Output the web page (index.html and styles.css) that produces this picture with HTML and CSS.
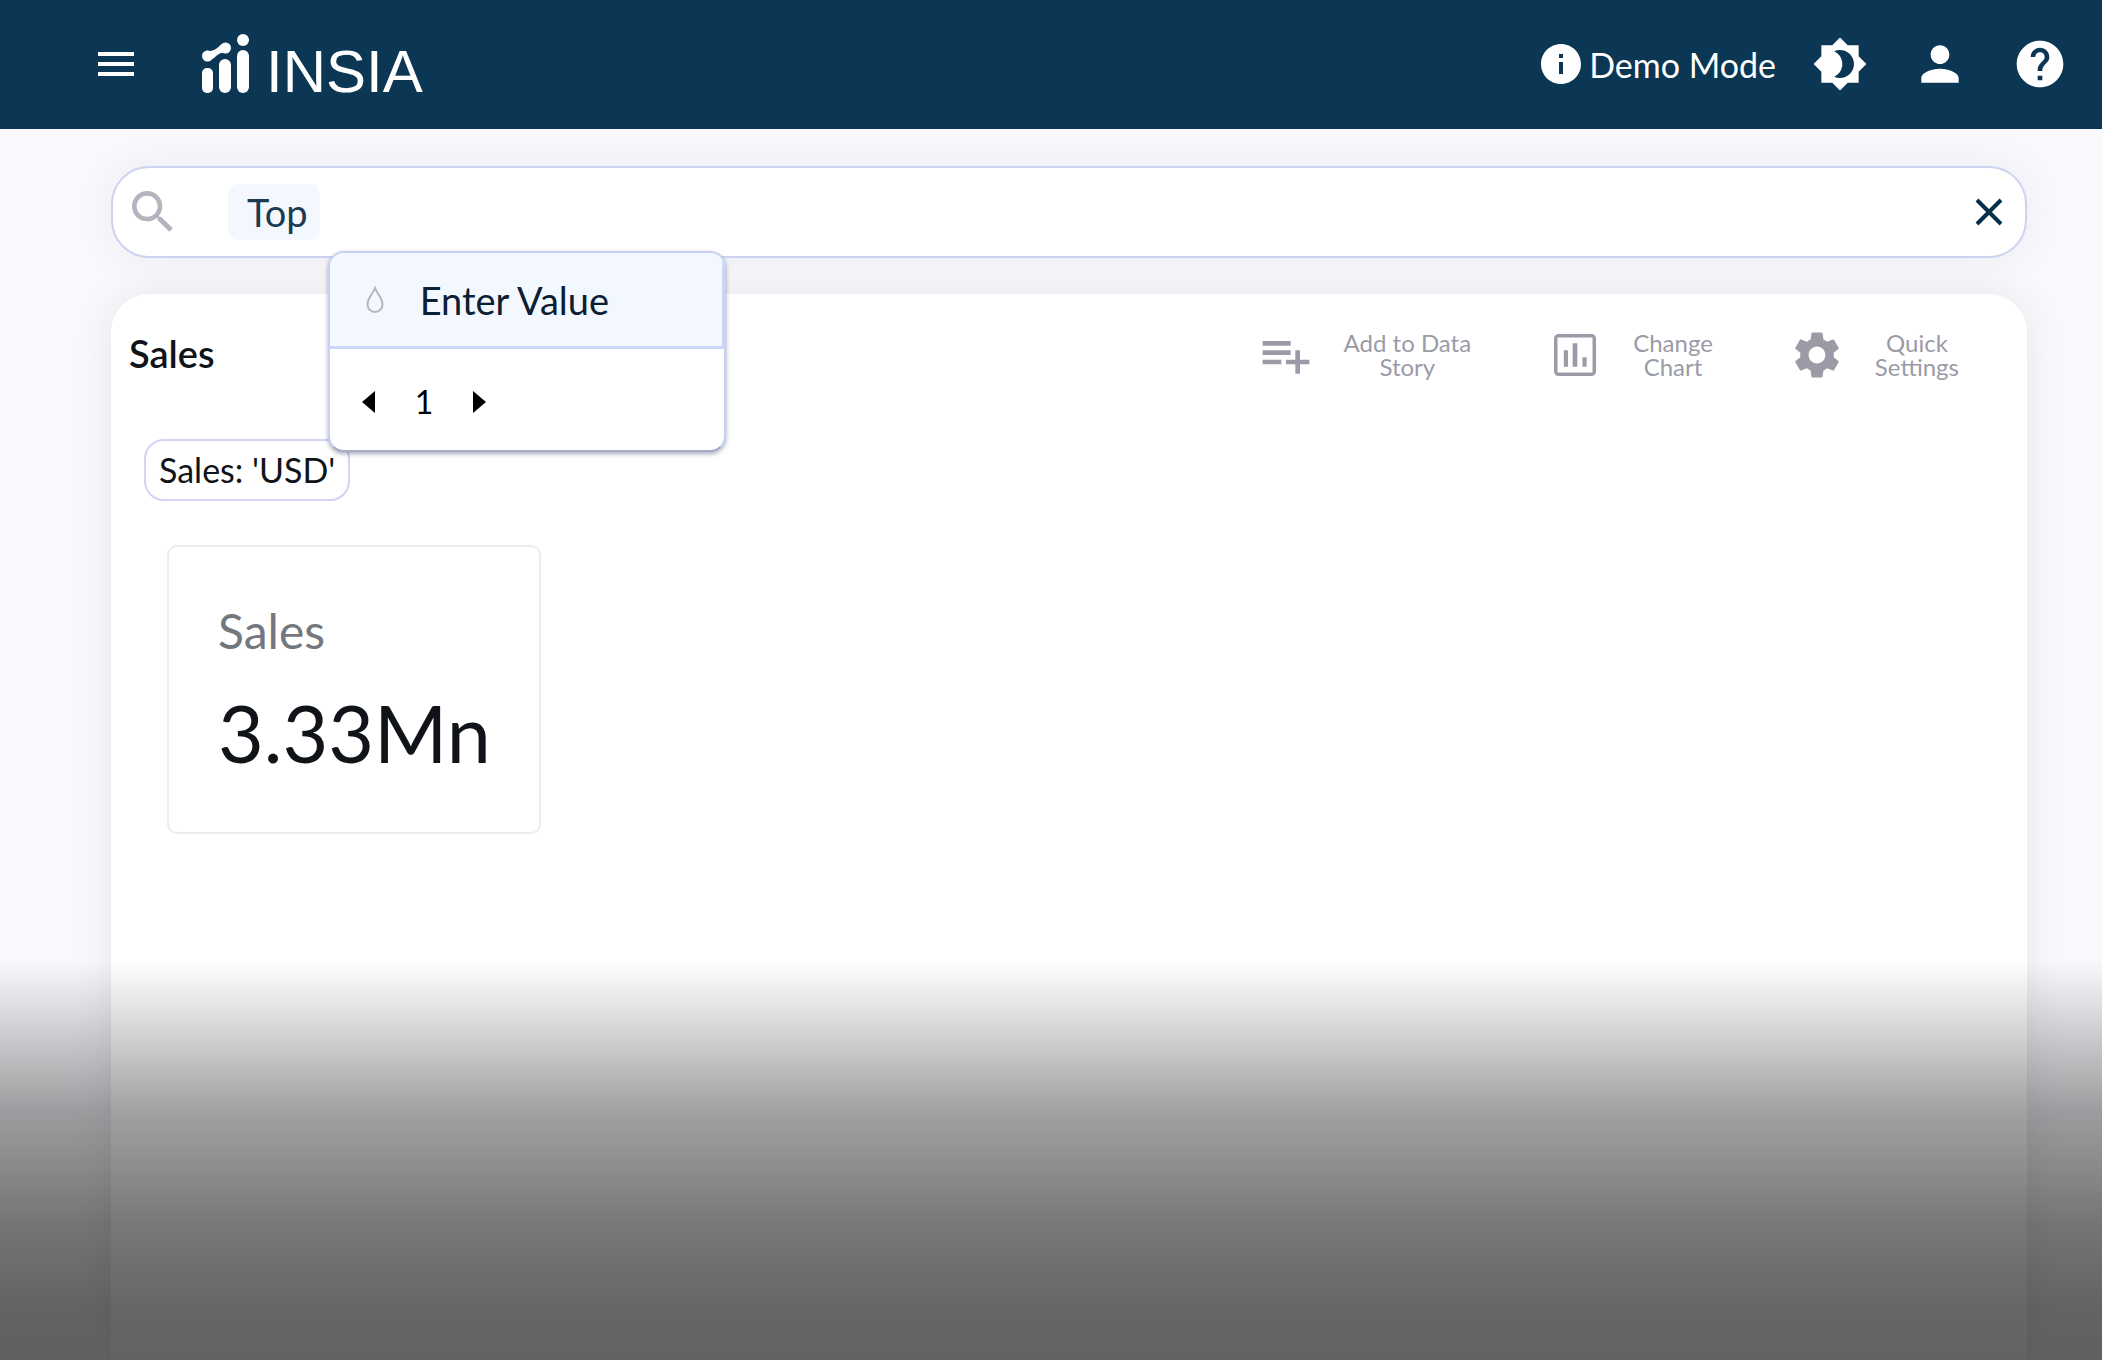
FILE: index.html
```html
<!DOCTYPE html>
<html lang="en">
<head>
  <meta charset="utf-8">
  <meta name="viewport" content="width=device-width, initial-scale=1">
  <title>INSIA</title>
  <link rel="stylesheet" href="styles.css">
</head>
<body>
  <header class="topbar">
    <button class="icon-button" type="button" aria-label="Menu">
      <svg class="menu-icon" viewBox="0 0 36 24" aria-hidden="true"><path d="M0 0h36v4H0zM0 10h36v4H0zM0 20h36v4H0z"/></svg>
    </button>
    <a class="brand" href="#">
      <svg class="brand-mark" viewBox="0 0 48 60" aria-hidden="true">
        <rect x="0" y="34" width="11" height="25" rx="5"/>
        <rect x="17" y="25" width="12" height="34" rx="6"/>
        <rect x="35" y="16" width="12" height="43" rx="6"/>
        <circle cx="41" cy="6" r="6"/>
        <circle cx="5.500" cy="22" r="5.500"/>
        <circle cx="23.500" cy="14" r="5.500"/>
        <path d="M5 16.500Q12 18.500 19 10.500L27 18Q18 17 12 24L7 27.300z"/>
      </svg>
      <span class="brand-name">INSIA</span>
    </a>
    <nav class="tools" aria-label="Account">
      <button class="demo" type="button">
        <svg class="demo-icon" viewBox="0 0 24 24" aria-hidden="true"><path d="M12 2C6.480 2 2 6.480 2 12s4.480 10 10 10 10-4.480 10-10S17.520 2 12 2zm1 15h-2v-6h2v6zm0-8h-2V7h2v2z"/></svg>
        <span>Demo Mode</span>
      </button>
      <button class="icon-button" type="button" aria-label="Theme">
        <svg class="icon" viewBox="0 0 24 24" aria-hidden="true"><path d="M20 8.690V4h-4.690L12 .69 8.690 4H4v4.690L.69 12 4 15.310V20h4.690L12 23.310 15.310 20H20v-4.690L23.310 12 20 8.690zM12 18c-.89 0-1.740-.2-2.500-.55C11.560 16.500 13 14.420 13 12s-1.440-4.500-3.500-5.450C10.260 6.200 11.110 6 12 6c3.310 0 6 2.690 6 6s-2.690 6-6 6z"/></svg>
      </button>
      <button class="icon-button" type="button" aria-label="Profile">
        <svg class="icon" viewBox="0 0 24 24" aria-hidden="true"><path d="M12 12c2.210 0 4-1.790 4-4s-1.790-4-4-4-4 1.790-4 4 1.790 4 4 4zm0 2c-2.670 0-8 1.340-8 4v2h16v-2c0-2.660-5.330-4-8-4z"/></svg>
      </button>
      <button class="icon-button" type="button" aria-label="Help">
        <svg class="icon" viewBox="0 0 24 24" aria-hidden="true"><path d="M12 2C6.480 2 2 6.480 2 12s4.480 10 10 10 10-4.480 10-10S17.520 2 12 2zm1 17h-2v-2h2v2zm2.070-7.750l-.9.920C13.450 12.900 13 13.500 13 15h-2v-.5c0-1.100.45-2.100 1.170-2.830l1.240-1.260c.37-.36.59-.86.59-1.410 0-1.100-.9-2-2-2s-2 .9-2 2H8c0-2.210 1.790-4 4-4s4 1.790 4 4c0 .88-.36 1.680-.93 2.250z"/></svg>
      </button>
    </nav>
  </header>

  <main class="page">
    <form class="search" role="search">
      <svg class="icon search-icon" viewBox="0 0 24 24" aria-hidden="true"><path d="M15.500 14h-.79l-.28-.27C15.410 12.590 16 11.110 16 9.500 16 5.910 13.090 3 9.500 3S3 5.910 3 9.500 5.910 16 9.500 16c1.610 0 3.090-.59 4.230-1.570l.27.28v.79l5 4.990L20.490 19l-4.990-5zm-6 0C7.010 14 5 11.990 5 9.500S7.010 5 9.500 5 14 7.010 14 9.500 11.990 14 9.500 14z"/></svg>
      <span class="token">Top</span>
      <div class="field">
        <input class="query" type="text" aria-label="Search">
        <div class="suggest">
          <button class="option" type="button">
            <svg class="drop" viewBox="0 0 18 28" aria-hidden="true"><path d="M9 2C7 8 1.500 12 1.500 18.500a7.500 7.500 0 0 0 15 0C16.500 12 11 8 9 2z"/></svg>
            <span>Enter Value</span>
          </button>
          <div class="pager">
            <button class="icon-button" type="button" aria-label="Previous page"><svg class="arrow" viewBox="0 0 13 22" aria-hidden="true"><path d="M13 0v22L0 11z"/></svg></button>
            <span>1</span>
            <button class="icon-button" type="button" aria-label="Next page"><svg class="arrow" viewBox="0 0 13 22" aria-hidden="true"><path d="M0 0v22l13-11z"/></svg></button>
          </div>
        </div>
      </div>
      <button class="icon-button" type="reset" aria-label="Clear search">
        <svg class="close" viewBox="0 0 28 28" aria-hidden="true"><path d="M2 2l24 24M26 2L2 26"/></svg>
      </button>
    </form>

    <section class="panel">
      <div class="panel-head">
        <h1 class="panel-title">Sales</h1>
        <div class="actions">
          <button class="action" type="button">
            <svg class="icon" viewBox="0 0 24 24" aria-hidden="true"><path d="M14 10H2v2h12v-2zm0-4H2v2h12V6zm4 8v-4h-2v4h-4v2h4v4h2v-4h4v-2h-4zM2 16h8v-2H2v2z"/></svg>
            <span>Add to Data<br>Story</span>
          </button>
          <button class="action" type="button">
            <svg class="icon" viewBox="0 0 24 24" aria-hidden="true"><path fill-rule="evenodd" d="M5 3h14a2 2 0 0 1 2 2v14a2 2 0 0 1-2 2H5a2 2 0 0 1-2-2V5a2 2 0 0 1 2-2zm-.5 1.500v15h15v-15zM7.200 10H9v7H7.200zM11 7h2v10h-2zM15.200 13H17v4h-1.800z"/></svg>
            <span>Change<br>Chart</span>
          </button>
          <button class="action" type="button">
            <svg class="icon" viewBox="0 0 24 24" aria-hidden="true"><path d="M19.140 12.940c.04-.3.060-.61.060-.94 0-.32-.02-.64-.07-.94l2.030-1.580c.18-.14.230-.41.120-.61l-1.920-3.320c-.12-.22-.37-.29-.59-.22l-2.390.96c-.5-.38-1.030-.7-1.620-.94l-.36-2.540c-.04-.24-.24-.41-.48-.41h-3.840c-.24 0-.43.170-.47.410l-.36 2.540c-.59.240-1.130.57-1.620.94l-2.390-.96c-.22-.08-.47 0-.59.220L2.740 8.870c-.12.210-.08.470.12.610l2.030 1.580c-.05.3-.09.630-.09.940s.02.640.070.940l-2.030 1.580c-.18.140-.23.410-.12.610l1.920 3.320c.12.220.37.290.59.220l2.390-.96c.5.380 1.030.7 1.620.94l.36 2.540c.05.240.24.410.48.410h3.840c.24 0 .44-.17.470-.41l.36-2.540c.59-.24 1.130-.56 1.620-.94l2.390.96c.22.080.47 0 .59-.22l1.920-3.320c.12-.22.070-.47-.12-.61l-2.010-1.580zM12 15.600c-1.980 0-3.600-1.620-3.600-3.600s1.620-3.600 3.600-3.600 3.600 1.620 3.600 3.600-1.620 3.600-3.600 3.600z"/></svg>
            <span>Quick<br>Settings</span>
          </button>
        </div>
      </div>
      <div class="panel-body">
        <span class="filter">Sales: 'USD'</span>
        <article class="metric">
          <h2 class="metric-label">Sales</h2>
          <p class="metric-value">3.33Mn</p>
        </article>
      </div>
    </section>
  </main>
  <div class="fade"></div>
</body>
</html>
```
FILE: styles.css
```css
* {
  box-sizing: border-box;
}

body {
  margin: 0;
  height: 100vh;
  display: flex;
  flex-direction: column;
  overflow: hidden;
  background: #f8f8fd;
  color: #101418;
  font-family: Lato, "Open Sans", sans-serif;
  font-size: 34px;
}

button {
  margin: 0;
  padding: 0;
  border: 0;
  background: none;
  color: inherit;
  font: inherit;
  cursor: pointer;
}

svg {
  display: block;
  flex: none;
  fill: currentColor;
}

.icon {
  width: 56px;
  height: 56px;
}

.topbar {
  flex: none;
  display: flex;
  align-items: center;
  height: 129px;
  padding: 0 34px 1px 98px;
  background: #0b3754;
  color: #fff;
}

.menu-icon {
  width: 36px;
  height: 24px;
}

.brand {
  display: flex;
  align-items: center;
  gap: 16px;
  margin-left: 68px;
  color: inherit;
  text-decoration: none;
}

.brand-mark {
  width: 48px;
  height: 60px;
}

.brand-name {
  padding-top: 16px;
  font-family: "Liberation Sans", Arial, sans-serif;
  font-size: 60px;
  line-height: 60px;
}

.tools {
  display: flex;
  align-items: center;
  gap: 44px;
  margin-left: auto;
}

.demo {
  display: flex;
  align-items: center;
  gap: 4px;
  margin-right: -8px;
  font-size: 34px;
}

.demo-icon {
  width: 48px;
  height: 48px;
}

.page {
  flex: 1;
  display: flex;
  flex-direction: column;
  gap: 36px;
  min-height: 0;
  padding: 37px 75px 0 111px;
}

.search {
  position: relative;
  z-index: 1;
  flex: none;
  display: flex;
  align-items: center;
  height: 92px;
  padding: 0 22px 0 12px;
  border: 2px solid #ccd3f2;
  border-radius: 38px;
  background: #fff;
  box-shadow: 0 0 40px rgba(0, 0, 0, 0.06);
}

.search-icon {
  color: #b4b4bf;
}

.token {
  margin-left: 47px;
  padding: 0 12px 0 19px;
  border-radius: 10px;
  background: #f4f7fe;
  color: #1c3a52;
  font-size: 38px;
  line-height: 56px;
}

.field {
  position: relative;
  flex: 1;
  margin-left: 8px;
}

.query {
  display: block;
  width: 100%;
  height: 56px;
  padding: 0 8px;
  border: 0;
  outline: 0;
  background: none;
  color: inherit;
  font: inherit;
}

.close {
  width: 28px;
  height: 28px;
  fill: none;
  stroke: #06304a;
  stroke-width: 4;
}

.suggest {
  position: absolute;
  top: 67px;
  left: 0;
  width: 398px;
  border: 2px solid #c6d1f3;
  border-bottom-color: #a6abc6;
  border-radius: 16px;
  background: #fff;
  box-shadow: 0 2px 4px rgba(40, 45, 90, 0.4);
  overflow: hidden;
}

.option {
  display: flex;
  align-items: center;
  gap: 36px;
  width: 100%;
  height: 96px;
  padding-left: 36px;
  border-right: 2px solid #c9d8fa;
  border-bottom: 3px solid #c9d8fa;
  background: #f3f7fe;
  color: #0c2033;
  font-size: 38px;
}

.drop {
  width: 18px;
  height: 28px;
  fill: none;
  stroke: #b4b7c0;
  stroke-width: 2;
}

.pager {
  display: flex;
  align-items: center;
  gap: 40px;
  height: 101px;
  padding: 4px 32px 0;
  color: #000;
  font-size: 32px;
}

.arrow {
  width: 13px;
  height: 22px;
}

.panel {
  flex: 1;
  padding: 33px 68px 0 18px;
  border-radius: 38px 38px 0 0;
  background: #fff;
  box-shadow: 0 0 40px rgba(0, 0, 0, 0.08);
}

.panel-head {
  display: flex;
  align-items: center;
  justify-content: space-between;
}

.panel-title {
  margin: 0;
  padding-bottom: 4px;
  font-size: 38px;
  font-weight: 600;
}

.actions {
  display: flex;
  gap: 76px;
}

.action {
  display: flex;
  align-items: center;
  gap: 30px;
  color: #9b9ba8;
  font-size: 24px;
  line-height: 24px;
}

.panel-body {
  display: flex;
  flex-direction: column;
  align-items: flex-start;
  gap: 44px;
  padding: 56px 0 0 15px;
}

.filter {
  padding: 0 13px;
  border: 2px solid #d2d3f5;
  border-radius: 20px;
  font-size: 34px;
  line-height: 58px;
}

.metric {
  margin-left: 23px;
  padding: 52px 48px 51px 49px;
  border: 2px solid #ececee;
  border-radius: 10px;
}

.metric-label {
  margin: 0;
  color: #74777e;
  font-size: 48px;
  font-weight: 400;
  line-height: 64px;
}

.metric-value {
  margin: 0;
  padding-top: 22px;
  font-size: 79px;
  line-height: 96px;
}

.fade {
  position: fixed;
  z-index: 2;
  right: 0;
  bottom: 0;
  left: 0;
  height: 400px;
  background: linear-gradient(
    rgba(0, 0, 0, 0) 0%,
    rgba(0, 0, 0, 0.09) 10%,
    rgba(0, 0, 0, 0.22) 23%,
    rgba(0, 0, 0, 0.37) 38%,
    rgba(0, 0, 0, 0.45) 53%,
    rgba(0, 0, 0, 0.53) 66%,
    rgba(0, 0, 0, 0.6) 87%,
    rgba(0, 0, 0, 0.61) 100%
  );
  pointer-events: none;
}
```
